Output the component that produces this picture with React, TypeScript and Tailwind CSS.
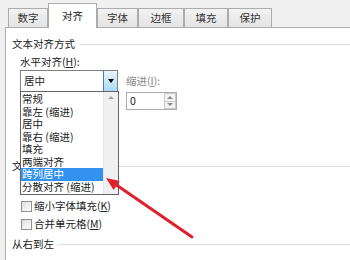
import React from 'react';

const tabs = [
  { label: '数字', w: 'w-[40px]' },
  { label: '对齐', w: 'w-[49px]', active: true },
  { label: '字体', w: 'w-[41px]' },
  { label: '边框', w: 'w-[46px]' },
  { label: '填充', w: 'w-[44px]' },
  { label: '保护', w: 'w-[44px]' },
];

const options = ['常规', '靠左 (缩进)', '居中', '靠右 (缩进)', '填充', '两端对齐', '跨列居中', '分散对齐 (缩进)'];

const Heading: React.FC<{ text: string; className?: string }> = ({ text, className = '' }) => (
  <div className={`flex h-[12px] items-center ${className}`}>
    <span className="leading-[12px]">{text}</span>
    <div className="ml-[5px] h-px flex-1 bg-[#dcdcdc]" />
  </div>
);

const Check: React.FC<{ text: string; hot: string }> = ({ text, hot }) => (
  <div className="flex h-[18px] items-center pl-[9px]">
    <div className="h-[11px] w-[11px] border border-[#8f8f8f] bg-gradient-to-br from-[#dedede] to-white" />
    <span className="ml-[2px] leading-[12px]">
      {text}(<span className="underline">{hot}</span>)
    </span>
  </div>
);

export default function App() {
  return (
    <div className="relative h-[260px] w-[350px] overflow-hidden bg-[#f0f0f0] font-['Noto_Sans_CJK_SC',sans-serif] text-[10.5px] text-[#222]">
      <div className="flex h-[27px] items-end pl-[8px]">
        {tabs.map((t) =>
          t.active ? (
            <div
              key={t.label}
              className={`relative z-10 -mb-px flex h-[25px] items-center justify-center border border-b-0 border-[#acacac] bg-white ${t.w}`}
            >
              {t.label}
            </div>
          ) : (
            <div
              key={t.label}
              className={`flex h-[19px] items-center justify-center border border-b-0 border-[#acacac] bg-gradient-to-b from-[#f3f3f3] to-[#e4e4e4] text-[#333] ${t.w}`}
            >
              {t.label}
            </div>
          )
        )}
      </div>

      <div className="ml-[5px] h-[233px] border-l border-t border-[#acacac] bg-white pl-[6px] pt-[10px]">
        <Heading text="文本对齐方式" />
        <div className="ml-[8px] mt-[6px] h-[12px] leading-[12px]">
          水平对齐(<span className="underline">H</span>):
        </div>
        <div className="ml-[8px] mt-[2px] flex items-start">
          <div className="relative w-[98px]">
            <div className="flex h-[22px] items-center border border-[#7f7f7f] bg-white">
              <span className="flex-1 pl-[3px] leading-[12px]">居中</span>
              <div className="flex h-full w-[14px] items-center justify-center border-l border-[#3c7fb1] bg-gradient-to-b from-[#eaf6fd] to-[#a9d9f4]">
                <div className="h-0 w-0 border-x-[3.5px] border-t-[4px] border-x-transparent border-t-black" />
              </div>
            </div>
            <div className="absolute left-0 top-[21px] z-20 flex w-[99px] border border-[#646464] bg-white">
              <div className="flex-1 py-[1px]">
                {options.map((o, i) => (
                  <div
                    key={o}
                    className={`flex h-[12.5px] items-center pl-[1px] leading-[12px] ${
                      i === 6 ? 'bg-[#3392f0] text-white' : ''
                    }`}
                  >
                    {o}
                  </div>
                ))}
              </div>
              <div className="flex w-[15px] justify-center border-l border-[#e6e6e6] bg-[#f0f0f0] pt-[4px]">
                <div className="h-0 w-0 border-x-[3px] border-b-[3px] border-x-transparent border-b-[#a0a0a0]" />
              </div>
            </div>
          </div>
          <div className="ml-[8px] mt-[5px]">
            <div className="h-[12px] leading-[12px] text-[#8a8a8a]">
              缩进(<span className="underline">I</span>):
            </div>
            <div className="mt-[5px] flex h-[18px] w-[51px] border border-[#abadb3] bg-white">
              <span className="flex flex-1 items-center pl-[3px] leading-[12px]">0</span>
              <div className="flex w-[12px] flex-col">
                <div className="flex flex-1 items-center justify-center border border-[#c9c9c9] bg-[#f3f3f3]">
                  <div className="h-0 w-0 border-x-[3px] border-b-[3px] border-x-transparent border-b-[#8a8a8a]" />
                </div>
                <div className="flex flex-1 items-center justify-center border border-t-0 border-[#c9c9c9] bg-[#f3f3f3]">
                  <div className="h-0 w-0 border-x-[3px] border-t-[3px] border-x-transparent border-t-[#8a8a8a]" />
                </div>
              </div>
            </div>
          </div>
        </div>

        <Heading text="文本控制" className="mt-[50px]" />
        <div className="mt-[7px]">
          {/* row hidden under the open list */}
          <div className="h-[18px]" />
          <Check text="缩小字体填充" hot="K" />
          <Check text="合并单元格" hot="M" />
        </div>
        <Heading text="从右到左" className="mt-[5px]" />
      </div>

      <svg className="pointer-events-none absolute left-0 top-0 z-30" width="350" height="260" viewBox="0 0 350 260">
        <line x1="192" y1="237" x2="115" y2="184" stroke="#e0202c" strokeWidth="3" strokeLinecap="round" />
        <polygon points="106,178 113.6,189.9 119.8,180.9" fill="#e0202c" />
      </svg>
    </div>
  );
}
